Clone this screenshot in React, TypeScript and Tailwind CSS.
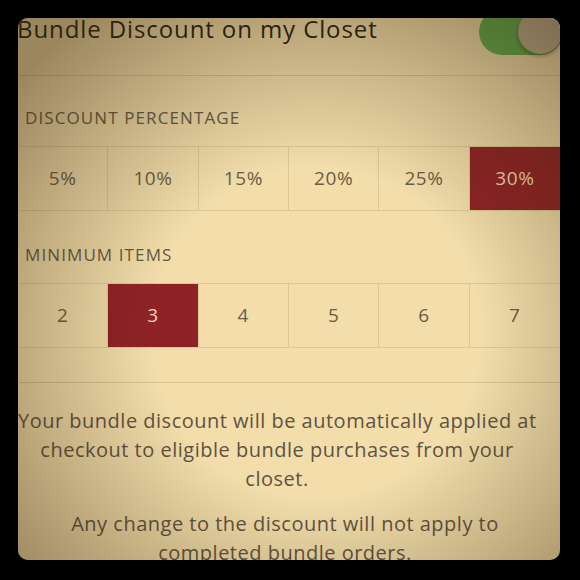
import React from "react";

const percents = ["5%", "10%", "15%", "20%", "25%", "30%"];
const minimums = ["2", "3", "4", "5", "6", "7"];

function OptionRow({ items, selected }: { items: string[]; selected: string }) {
  return (
    <div className="grid grid-cols-6 h-[65px] border-y border-[#dcc796]">
      {items.map((item, i) => {
        const active = item === selected;
        return (
          <div
            key={item}
            className={
              "flex items-center justify-center text-[19px] tracking-[0.6px] " +
              (i < items.length - 1 ? "border-r border-[#dcc796] " : "") +
              (active ? "bg-[#8e2226] text-[#f3d5b8]" : "text-[#6a5d46]")
            }
          >
            {item}
          </div>
        );
      })}
    </div>
  );
}

export default function App() {
  return (
    <div
      className="w-[580px] h-[580px] bg-black pt-[18px] pl-[18px]"
      style={{ fontFamily: '"Open Sans", "Liberation Sans", sans-serif' }}
    >
      <div className="relative w-[542px] h-[542px] overflow-hidden rounded-[10px] bg-[#f2ddab]">
        {/* header with title and switch */}
        <div className="flex h-[58px] items-start justify-between border-b border-[#d6c190]">
          <div className="-mt-[4px] -ml-[1px] text-[24px] leading-[30px] tracking-[0.9px] text-[#221d14] whitespace-nowrap">
            Bundle Discount on my Closet
          </div>
          <div className="relative -mt-[9px] -mr-[3px] h-[46px] w-[84px] shrink-0 rounded-full bg-[#5fae4e]">
            <div className="absolute right-[1px] top-[1px] h-[44px] w-[44px] rounded-full bg-[#bfb091] shadow-[0_2px_4px_rgba(0,0,0,0.35)]" />
          </div>
        </div>

        <div className="flex h-[70px] items-end pb-[20px] pl-[7px] text-[17px] leading-none tracking-[1.1px] text-[#665a44]">
          DISCOUNT PERCENTAGE
        </div>
        <OptionRow items={percents} selected="30%" />

        <div className="flex h-[72px] items-end pb-[20px] pl-[7px] text-[17px] leading-none tracking-[1.1px] text-[#665a44]">
          MINIMUM ITEMS
        </div>
        <OptionRow items={minimums} selected="3" />

        <div className="h-[35px] border-b border-[#d6c190]" />

        <div className="pt-[23px] text-[20px] leading-[29px] tracking-[0.5px] text-[#5f5341]">
          <p className="pr-[24px] text-center whitespace-nowrap">
            <span className="block">Your bundle discount will be automatically applied at</span>
            <span className="block">checkout to eligible bundle purchases from your</span>
            <span className="block">closet.</span>
          </p>
          <p className="mt-[16px] pr-[8px] text-center whitespace-nowrap">
            <span className="block">Any change to the discount will not apply to</span>
            <span className="block">completed bundle orders.</span>
          </p>
        </div>

        {/* photo vignette */}
        <div className="pointer-events-none absolute inset-0 bg-[radial-gradient(ellipse_72%_72%_at_55%_58%,rgba(0,0,0,0)_42%,rgba(60,40,10,0.48)_100%)]" />
      </div>
    </div>
  );
}
